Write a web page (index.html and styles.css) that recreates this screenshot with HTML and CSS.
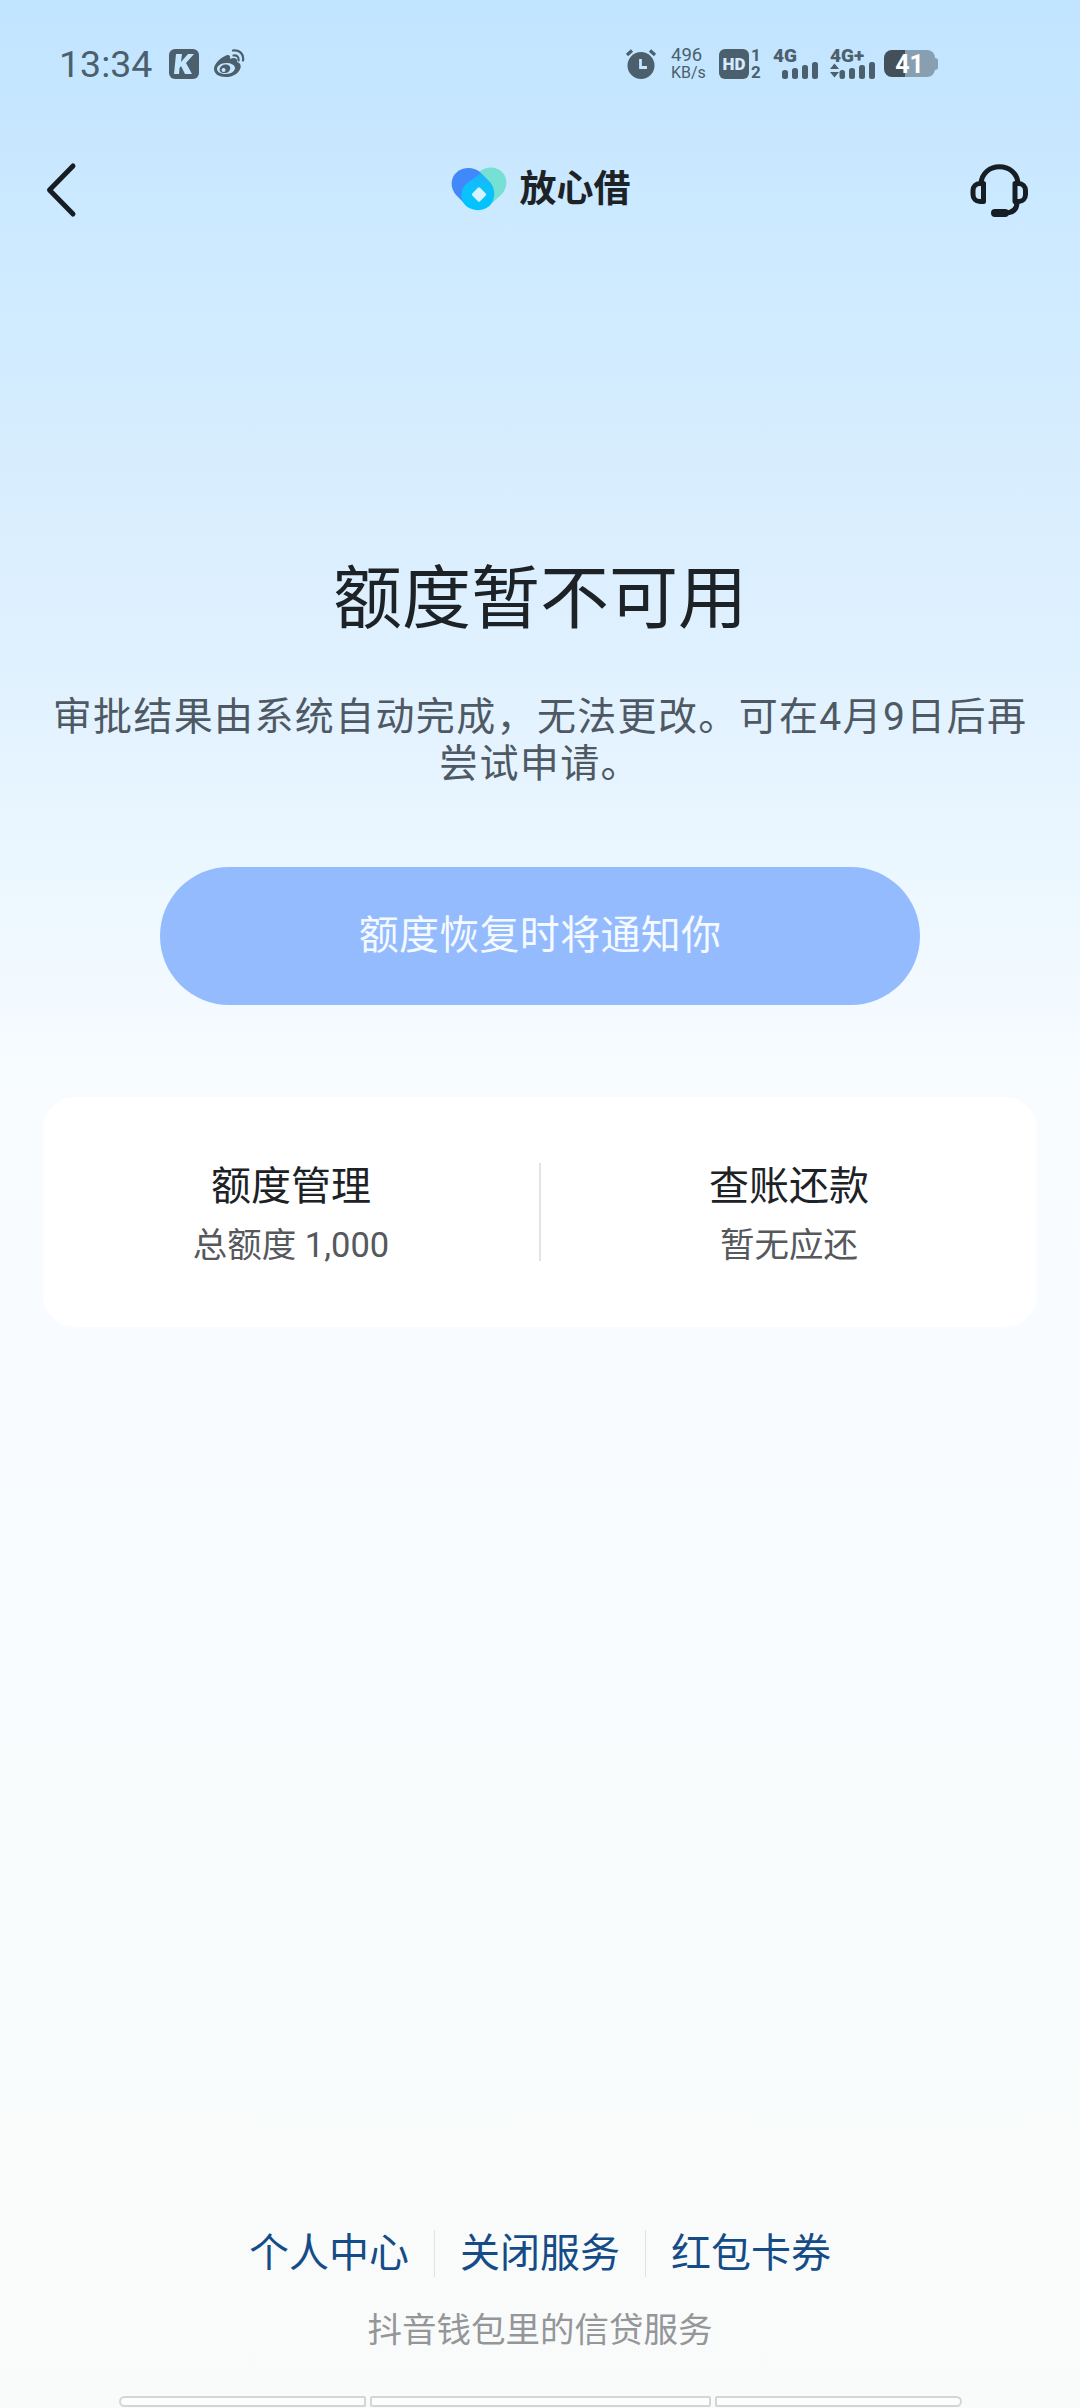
FILE: index.html
```html
<!DOCTYPE html>
<html lang="zh-CN">
<head>
    <meta charset="utf-8">
    <title>放心借</title>
    <link rel="stylesheet" href="styles.css">
</head>
<body>
    <div class="page">
        <div class="status-bar">
            <span class="time">13:34</span>
            <svg class="app-k" width="30" height="30" viewBox="0 0 30 30">
                <rect width="30" height="30" rx="6" fill="#4b5f6c"/>
                <path d="M7 5h6l-1 8 7-8h6l-8 9 6 11h-7l-4-8-1.500 2-.5 6H5z" fill="#c4e6ff"/>
            </svg>
            <svg class="weibo" width="32" height="30" viewBox="0 0 32 30">
                <path fill="#4b5f6c" fill-rule="evenodd" d="M12 7c3-2 6-1 5 3 4-2 8-1 7 3 4 1 5 5 2 9-3 4-8 6-13 6C6 28 1 25 1 20 1 15 7 9 12 7zM13 14c-5 0-9 3-9 6s4 5 9 5 9-3 9-6-4-5-9-5z"/>
                <path fill="#4b5f6c" fill-rule="evenodd" d="M12 15.500c4 0 6 2 5 5s-4 4-7 3.500-4-3-3-5 3-3.500 5-3.500zM10.500 19a2 2 0 1 0 .1 4 2 2 0 0 0-.1-4z"/>
                <path d="M20 1.500c7-1 11 4 10 10M20.500 6.500c3.500-.5 5.500 1.500 5 5" fill="none" stroke="#4b5f6c" stroke-width="2.200" stroke-linecap="round"/>
            </svg>
            <div class="spacer"></div>
            <svg class="alarm" width="32" height="30" viewBox="0 0 32 30">
                <circle cx="16" cy="16.500" r="13.500" fill="#4b5f6c"/>
                <path d="M2 6l5-4.500M30 6l-5-4.500" stroke="#4b5f6c" stroke-width="3.200"/>
                <path d="M15.500 10v8.500H22" fill="none" stroke="#c4e6ff" stroke-width="2.800"/>
            </svg>
            <div class="speed"><span>496</span><span>KB/s</span></div>
            <div class="hd">HD</div>
            <div class="sim"><span>1</span><span>2</span></div>
            <div class="signal">
                <span>4G</span>
                <svg width="46" height="17" viewBox="0 0 46 17" fill="#4b5f6c">
                    <rect x="9" y="8" width="6" height="9" rx="2.500"/>
                    <rect x="19" y="6" width="6" height="11" rx="2.500"/>
                    <rect x="29" y="3" width="6" height="14" rx="2.500"/>
                    <rect x="39" y="0" width="6" height="17" rx="2.500"/>
                </svg>
            </div>
            <div class="signal signal-plus">
                <span>4G+</span>
                <svg width="46" height="17" viewBox="0 0 46 17" fill="#4b5f6c">
                    <path d="M4.500 1.500l4.500 5.500H0zM4.500 15.500l4.500-5.500H0z"/>
                    <rect x="9.500" y="8" width="5.500" height="9" rx="2.500"/>
                    <rect x="19" y="6" width="6" height="11" rx="2.500"/>
                    <rect x="29" y="3" width="6" height="14" rx="2.500"/>
                    <rect x="39" y="0" width="6" height="17" rx="2.500"/>
                </svg>
            </div>
            <div class="battery">41</div>
            <div class="battery-tip"></div>
        </div>

        <div class="nav">
            <svg width="44" height="60" viewBox="0 0 44 60">
                <path d="M33 6L9.500 30 33 54" fill="none" stroke="#161e24" stroke-width="5" stroke-linecap="round" stroke-linejoin="round"/>
            </svg>
            <div class="brand">
                <svg width="58" height="46" viewBox="0 0 58 46">
                    <defs>
                        <linearGradient id="drop" x1="0" y1="0" x2="0" y2="1">
                            <stop offset="0" stop-color="#20b0f8"/>
                            <stop offset=".4" stop-color="#0cc2fb"/>
                            <stop offset="1" stop-color="#00c3ff"/>
                        </linearGradient>
                    </defs>
                    <path d="M28 6c7-7 17-7 23-2 7 6 7 16 1 23L39 39z" fill="#75e0d3"/>
                    <path d="M31 6C25 0 14-1 7 5 0 11 0 21 6 28l12 12z" fill="#4188fa"/>
                    <path d="M31 6l9 9c5 6 6 15 1 22-6 8-19 8-26 1-5-6-5-15 1-21z" fill="url(#drop)"/>
                    <rect x="23.500" y="22" width="11" height="11" rx="1.500" transform="rotate(45 29 27.500)" fill="#d5f3ff"/>
                </svg>
                <span>放心借</span>
            </div>
            <svg width="60" height="60" viewBox="0 0 60 60" fill="none" stroke="#161e24" stroke-width="5">
                <path d="M13 24C14 1 49 1 50 24"/>
                <path d="M15.500 23.500v18H12c-4 0-7-3-7-7v-4c0-4 3-7 7-7zM47 23.500v18h3.500c4 0 7-3 7-7v-4c0-4-3-7-7-7z" stroke-linejoin="round"/>
                <path d="M49 42c0 7-4 11-12 11"/>
                <path d="M27 53h10" stroke-width="8" stroke-linecap="round"/>
            </svg>
        </div>

        <div class="main">
            <h1>额度暂不可用</h1>
            <p class="desc">审批结果由系统自动完成，无法更改。可在4月9日后再<br>尝试申请。</p>
            <button class="notify">额度恢复时将通知你</button>
            <div class="card">
                <div class="card-item">
                    <div class="card-title">额度管理</div>
                    <div class="card-sub">总额度 1,000</div>
                </div>
                <div class="card-line"></div>
                <div class="card-item">
                    <div class="card-title">查账还款</div>
                    <div class="card-sub">暂无应还</div>
                </div>
            </div>
        </div>

        <div class="footer">
            <div class="links">
                <a>个人中心</a>
                <a>关闭服务</a>
                <a>红包卡券</a>
            </div>
            <div class="slogan">抖音钱包里的信贷服务</div>
        </div>
        <div class="bottom-tabs">
            <div class="tab tab-first"></div>
            <div class="tab tab-mid"></div>
            <div class="tab tab-last"></div>
        </div>
    </div>
</body>
</html>
```
FILE: styles.css
```css
* {
    box-sizing: border-box;
}
body {
    margin: 0;
    font-family: Roboto, "Noto Sans CJK SC", sans-serif;
    color: #1c2226;
}
.page {
    width: 1080px;
    height: 2408px;
    display: flex;
    flex-direction: column;
    overflow: hidden;
    background: linear-gradient(#c1e4ff 0, #c5e6ff 90px, #cbe9ff 200px, #dceffe 570px, #e4f3ff 740px, #edf8ff 900px, #f3faff 1010px, #f8fcff 1090px, #f8fbff 1400px, #f9fcfd 1800px, #f9fbfa 2408px);
}

/* status bar */
.status-bar {
    height: 127px;
    padding: 0 142px 0 59px;
    display: flex;
    align-items: center;
    color: #4b5f6c;
}
.time {
    font-size: 37.500px;
    width: 110px;
}
.weibo {
    margin-left: 14px;
}
.spacer {
    flex: 1;
}
.speed {
    width: 48px;
    margin-left: 14px;
    display: flex;
    flex-direction: column;
    font-size: 16px;
    line-height: 17px;
}
.speed span:first-child {
    font-size: 18.500px;
}
.hd {
    width: 30px;
    height: 30px;
    border-radius: 6px;
    background-color: #4b5f6c;
    color: #d5ecfc;
    font-size: 17px;
    font-weight: 900;
    line-height: 31px;
    text-align: center;
}
.sim {
    width: 24px;
    padding-left: 2px;
    display: flex;
    flex-direction: column;
    font-size: 17px;
    font-weight: 700;
    line-height: 17px;
}
.signal {
    width: 57px;
    height: 30px;
    display: flex;
    flex-direction: column;
    justify-content: space-between;
    font-size: 19px;
    font-weight: 900;
    line-height: 14px;
}
.signal span {
    height: 13px;
}
.signal-plus {
    width: 54px;
}
.battery {
    width: 51px;
    height: 27px;
    border-radius: 8px;
    background: linear-gradient(90deg, #434f59 42%, #879fb1 42%);
    color: white;
    font-size: 25px;
    font-weight: 700;
    line-height: 29px;
    text-align: center;
}
.battery-tip {
    width: 3px;
    height: 12px;
    border-radius: 0 4px 4px 0;
    background-color: #879fb1;
}

/* title bar */
.nav {
    height: 126px;
    padding: 0 52px 0 40px;
    display: flex;
    align-items: center;
    justify-content: space-between;
}
.brand {
    margin-left: 28px;
    display: flex;
    align-items: center;
    gap: 12px;
    font-size: 37px;
    font-weight: 700;
    line-height: 50px;
}

/* content */
.main {
    display: flex;
    flex-direction: column;
    align-items: center;
}
h1 {
    margin: 297px 0 0;
    font-size: 69px;
    font-weight: 400;
    line-height: 100px;
}
.desc {
    margin: 44px 0 0;
    color: #4f5963;
    font-size: 39px;
    letter-spacing: 1.350px;
    line-height: 47px;
    text-align: center;
    white-space: nowrap;
}
.notify {
    width: 760px;
    height: 138px;
    margin-top: 79px;
    padding: 0 0 9px;
    border: none;
    border-radius: 69px;
    background-color: #95bbff;
    color: #f4faff;
    font-family: inherit;
    font-size: 40px;
    letter-spacing: 0.300px;
}
.card {
    width: 994px;
    height: 230px;
    margin-top: 92px;
    display: flex;
    align-items: center;
    border-radius: 32px;
    background-color: white;
}
.card-item {
    flex: 1;
    padding-top: 7px;
    text-align: center;
}
.card-title {
    font-size: 40px;
    line-height: 60px;
}
.card-sub {
    color: #55585c;
    font-size: 34.500px;
    line-height: 57px;
}
.card-line {
    width: 2px;
    height: 98px;
    background-color: #e2e3e5;
}

/* footer */
.footer {
    margin-top: auto;
    display: flex;
    flex-direction: column;
    align-items: center;
}
.links {
    display: flex;
}
.links a {
    padding: 0 25px;
    color: #154c88;
    font-size: 40px;
    line-height: 47px;
}
.links a + a {
    border-left: 1px solid #dfe2e3;
}
.slogan {
    margin-top: 30px;
    color: #949699;
    font-size: 34.500px;
    line-height: 46px;
}
.bottom-tabs {
    margin-top: 43px;
    padding: 0 118px 1px 119px;
    display: flex;
    gap: 4px;
}
.tab {
    height: 11px;
    flex: 247;
    border: 2px solid #d4d6d6;
    border-radius: 2px;
    background-color: #fcfefe;
}
.tab-first {
    border-radius: 6px 2px 2px 6px;
}
.tab-mid {
    flex: 341;
}
.tab-last {
    border-radius: 2px 6px 6px 2px;
}
```
